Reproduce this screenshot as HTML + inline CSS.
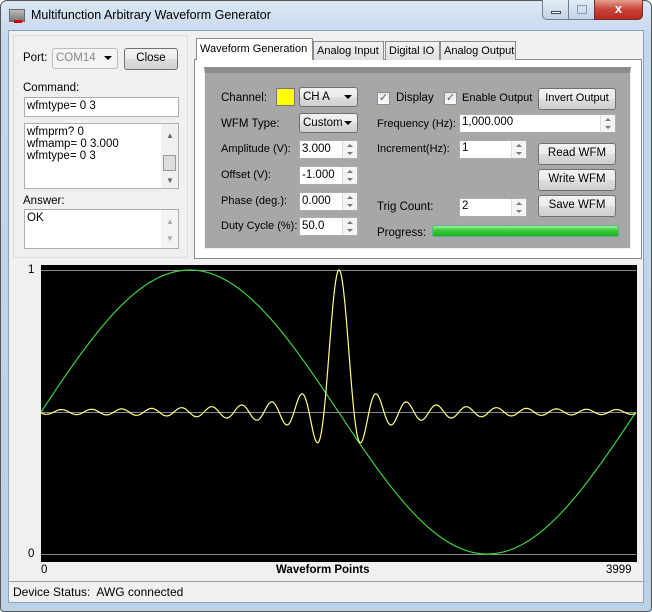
<!DOCTYPE html>
<html><head><meta charset="utf-8"><style>
*{box-sizing:border-box;margin:0;padding:0}
body{width:652px;height:612px;overflow:hidden;background:#fff;font-family:"Liberation Sans",sans-serif;font-size:11.5px;color:#000;position:relative}
.a{position:absolute}
.frame{left:0;top:0;width:652px;height:612px;border:1px solid #555;border-radius:7px 7px 4px 4px;background:linear-gradient(#dbe7f4,#c4d7ec 40px,#bcd0e6)}
.client{left:8px;top:30px;width:636px;height:573px;background:#f0f0f0;border:1px solid #8ea3bb}
.tb{background:#fff;border:1px solid #abadb3}
.btn{border:1px solid #707070;border-radius:3px;background:linear-gradient(#f2f2f2,#ebebeb 50%,#dddddd 51%,#cfcfcf);text-align:center;line-height:19px}
.lbl{white-space:nowrap}
.spin{width:15px;border-left:1px solid #ddd;background:#f4f4f4}
.spin:before,.spin:after{content:"";position:absolute;left:4px;border-left:3px solid transparent;border-right:3px solid transparent}
.spin:before{top:3px;border-bottom:3px solid #777}
.spin:after{bottom:3px;border-top:3px solid #777}
.combo{border:1px solid #707070;border-radius:3px;background:linear-gradient(#f2f2f2,#ebebeb 50%,#dddddd 51%,#cfcfcf);padding-left:3px;line-height:18px}
.combo:after{content:"";position:absolute;right:5px;top:7px;border-left:4px solid transparent;border-right:4px solid transparent;border-top:4px solid #000}
.cb{width:13px;height:13px;border:1px solid #8f8f8f;background:linear-gradient(#e8e8e8,#fafafa);color:#4a5f80;font-size:11px;line-height:11px;text-align:center}
.tab{border:1px solid #898c95;border-bottom:none;background:linear-gradient(#f2f2f2,#e0e0e0);padding:0 3px;line-height:18px;white-space:nowrap;font-size:11px}
</style></head><body>
<div class="a frame"></div>
<div class="a" style="left:9px;top:9px;width:16px;height:13px;background:linear-gradient(#bbb,#777);border:1px solid #666"></div>
<div class="a" style="left:14px;top:20px;width:8px;height:3px;background:#c00"></div>
<div class="a lbl" style="left:31px;top:8px;font-size:12.5px">Multifunction Arbitrary Waveform Generator</div>
<div class="a" style="left:542px;top:0;width:27px;height:20px;border:1px solid #6d7d92;border-top:none;border-radius:0 0 0 5px;background:linear-gradient(#e3ecf6,#c3d3e6)"><div class="a" style="left:8px;top:11px;width:10px;height:3px;background:#fff;border:1px solid #445"></div></div>
<div class="a" style="left:568px;top:0;width:27px;height:20px;border:1px solid #6d7d92;border-top:none;background:linear-gradient(#e3ecf6,#c3d3e6)"><div class="a" style="left:8px;top:5px;width:10px;height:9px;border:1px solid #8a9ab0"></div></div>
<div class="a" style="left:594px;top:0;width:49px;height:20px;border:1px solid #6d3030;border-top:none;border-radius:0 0 5px 0;background:linear-gradient(#e6a090,#c7443a 50%,#b8281c);color:#fff;font-weight:bold;text-align:center;line-height:18px;font-size:13px">x</div>
<div class="a client"></div>
<div class="a" style="left:13px;top:35px;width:175px;height:223px;border:1px solid #dcdcdc"></div>
<div class="a lbl" style="left:23px;top:52px">Port:</div>
<div class="a combo" style="left:52px;top:48px;width:66px;height:21px;color:#888;border-color:#bbb;background:#f4f4f4">COM14</div>
<div class="a btn" style="left:124px;top:48px;width:54px;height:22px">Close</div>
<div class="a lbl" style="left:23px;top:82px">Command:</div>
<div class="a tb" style="left:24px;top:97px;width:155px;height:20px;padding:2px 2px">wfmtype= 0 3</div>
<div class="a tb" style="left:24px;top:123px;width:155px;height:66px;padding:2px 2px;line-height:12px">wfmprm? 0<br>wfmamp= 0 3.000<br>wfmtype= 0 3</div>
<div class="a" style="left:161px;top:124px;width:17px;height:64px;background:#f0f0f0"><div class="a" style="left:2px;top:31px;width:13px;height:16px;border:1px solid #999;background:#ddd"></div><div class="a" style="left:5px;top:7px;color:#666;font-size:8px">▲</div><div class="a" style="left:5px;top:52px;color:#666;font-size:8px">▼</div></div>
<div class="a lbl" style="left:23px;top:195px">Answer:</div>
<div class="a tb" style="left:24px;top:209px;width:155px;height:40px;padding:2px 2px">OK</div>
<div class="a" style="left:161px;top:210px;width:17px;height:38px;background:#f4f4f4"><div class="a" style="left:5px;top:7px;color:#aaa;font-size:8px">▲</div><div class="a" style="left:5px;top:24px;color:#aaa;font-size:8px">▼</div></div>
<div class="a" style="left:194px;top:59px;width:448px;height:200px;background:#fff;border:1px solid #898c95"></div>
<div class="a tab" style="left:313px;top:41px;width:71px;height:19px">Analog Input</div>
<div class="a tab" style="left:385px;top:41px;width:55px;height:19px">Digital IO</div>
<div class="a tab" style="left:440px;top:41px;width:76px;height:19px">Analog Output</div>
<div class="a tab" style="left:196px;top:38px;width:117px;height:22px;background:#fff;line-height:20px">Waveform Generation</div>
<div class="a" style="left:204px;top:67px;width:427px;height:182px;background:#a7a7a7;border:1px solid #f0f0f0;border-top:6px solid #8c8c8c"></div>
<div class="a lbl" style="left:221px;top:92px">Channel:</div>
<div class="a" style="left:276px;top:88px;width:19px;height:18px;background:#ff0;border:1px solid #777"></div>
<div class="a combo" style="left:299px;top:87px;width:59px;height:20px">CH A</div>
<div class="a lbl" style="left:221px;top:118px">WFM Type:</div>
<div class="a combo" style="left:299px;top:113px;width:59px;height:20px">Custom</div>
<div class="a lbl" style="left:221px;top:143px;font-size:11px">Amplitude (V):</div>
<div class="a lbl" style="left:221px;top:169px;font-size:11px">Offset (V):</div>
<div class="a lbl" style="left:221px;top:195px;font-size:11px">Phase (deg.):</div>
<div class="a lbl" style="left:221px;top:220px;font-size:11px">Duty Cycle (%):</div>
<div class="a tb" style="left:299px;top:140px;width:59px;height:19px;padding:2px 2px">3.000</div><div class="a spin" style="left:342px;top:141px;height:17px"></div>
<div class="a tb" style="left:299px;top:166px;width:59px;height:19px;padding:2px 2px">-1.000</div><div class="a spin" style="left:342px;top:167px;height:17px"></div>
<div class="a tb" style="left:299px;top:192px;width:59px;height:19px;padding:2px 2px">0.000</div><div class="a spin" style="left:342px;top:193px;height:17px"></div>
<div class="a tb" style="left:299px;top:217px;width:59px;height:19px;padding:2px 2px">50.0</div><div class="a spin" style="left:342px;top:218px;height:17px"></div>
<div class="a cb" style="left:377px;top:92px">✓</div><div class="a lbl" style="left:396px;top:92px">Display</div>
<div class="a cb" style="left:444px;top:92px">✓</div><div class="a lbl" style="left:462px;top:92px;font-size:11px">Enable Output</div>
<div class="a btn" style="left:538px;top:88px;width:78px;height:22px;font-size:11px">Invert Output</div>
<div class="a lbl" style="left:377px;top:118px;font-size:11px">Frequency (Hz):</div>
<div class="a tb" style="left:459px;top:114px;width:157px;height:19px;padding:1px 2px">1,000.000</div><div class="a spin" style="left:600px;top:115px;height:17px"></div>
<div class="a lbl" style="left:377px;top:143px;font-size:11px">Increment(Hz):</div>
<div class="a tb" style="left:459px;top:140px;width:68px;height:19px;padding:1px 2px">1</div><div class="a spin" style="left:511px;top:141px;height:17px"></div>
<div class="a btn" style="left:538px;top:143px;width:78px;height:22px">Read WFM</div>
<div class="a btn" style="left:538px;top:169px;width:78px;height:22px">Write WFM</div>
<div class="a btn" style="left:538px;top:195px;width:78px;height:22px">Save WFM</div>
<div class="a lbl" style="left:377px;top:201px">Trig Count:</div>
<div class="a tb" style="left:459px;top:198px;width:68px;height:19px;padding:1px 2px">2</div><div class="a spin" style="left:511px;top:199px;height:17px"></div>
<div class="a lbl" style="left:377px;top:227px">Progress:</div>
<div class="a" style="left:432px;top:225px;width:187px;height:12px;border-radius:2px;background:linear-gradient(#9ef09e,#3ccf3c 40%,#1fae1f);border:1px solid #6a9"></div>
<div class="a" style="left:41px;top:265px;width:596px;height:297px;background:#000"></div>
<svg class="a" style="left:0;top:0" width="652" height="612">
<line x1="41" y1="270.5" x2="636" y2="270.5" stroke="#888" stroke-width="1"/>
<line x1="41" y1="412.5" x2="636" y2="412.5" stroke="#888" stroke-width="1"/>
<line x1="41" y1="554.5" x2="636" y2="554.5" stroke="#888" stroke-width="1"/>
<path id="g" fill="none" stroke="#3fcf3f" stroke-width="1.2"/>
<path id="y" fill="none" stroke="#ffff80" stroke-width="1.2"/>
</svg>
<div class="a" style="left:28px;top:264px">1</div>
<div class="a" style="left:28px;top:548px">0</div>
<div class="a" style="left:41px;top:564px">0</div>
<div class="a" style="left:276px;top:564px;font-weight:bold">Waveform Points</div>
<div class="a" style="left:606px;top:564px">3999</div>
<div class="a" style="left:9px;top:581px;width:634px;height:1px;background:#a0a0a0"></div>
<div class="a lbl" style="left:13px;top:585px;font-size:12px">Device Status:&nbsp; AWG connected</div>
<script>
var g="",y="";
for(var x=41;x<=636;x+=1){
 var t=(x-41)/595;g+=(x==41?"M":"L")+x+" "+(412-142*Math.sin(2*Math.PI*t)).toFixed(1);
}
for(var x=41;x<=636;x+=0.5){
 var u=(x-339)/15;var s=u==0?1:Math.sin(Math.PI*u)/(Math.PI*u);
 y+=(x==41?"M":"L")+x+" "+(412-142*s).toFixed(1);
}
document.getElementById("g").setAttribute("d",g);
document.getElementById("y").setAttribute("d",y);
</script>
</body></html>
